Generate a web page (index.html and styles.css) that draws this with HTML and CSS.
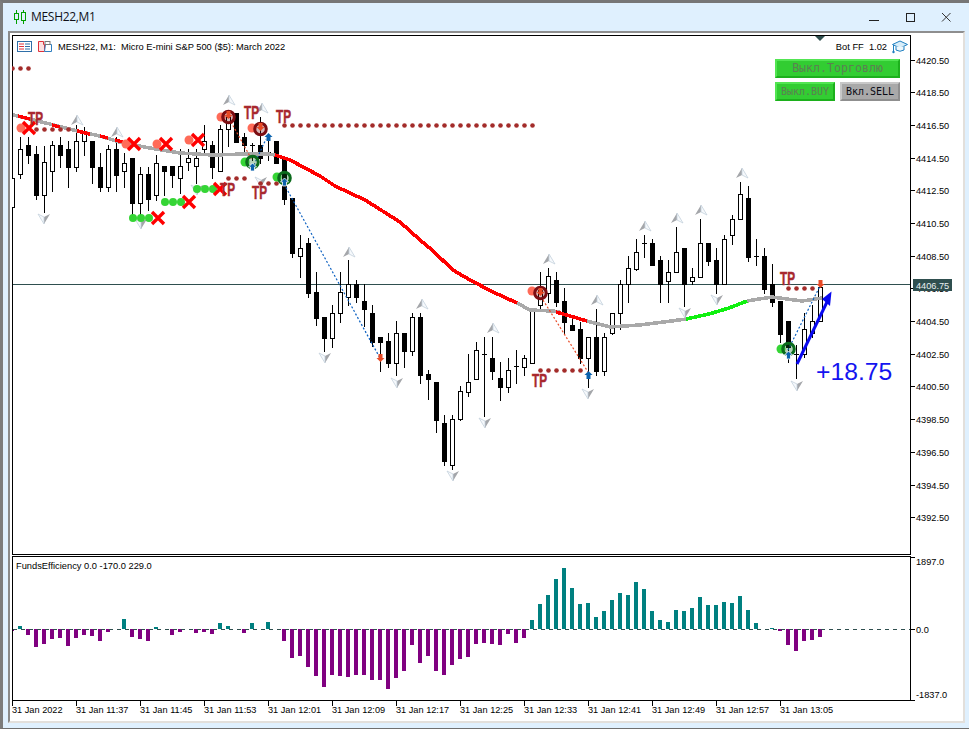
FILE: index.html
```html
<!DOCTYPE html>
<html lang="en">
<head>
<meta charset="utf-8">
<title>MESH22,M1</title>
<link rel="stylesheet" href="styles.css">
</head>
<body>
<div class="window">
  <header class="titlebar">
    <svg class="app-icon" width="12" height="14" viewBox="0 0 12 14"><path d="M2.5 0v14M9.5 0v14" stroke="#00a000" fill="none"/><rect x="0.5" y="3.5" width="4" height="6" fill="#dff0fe" stroke="#00a000"/><rect x="7.5" y="2.5" width="4" height="8" fill="#dff0fe" stroke="#00a000"/></svg>
    <span class="window-title">MESH22,M1</span>
    <div class="controls">
      <svg width="10" height="10" viewBox="0 0 10 10"><path d="M0 8.5h10" stroke="#222"/></svg>
      <svg width="10" height="10" viewBox="0 0 10 10"><rect x="1.5" y="1.5" width="8" height="8" fill="none" stroke="#222"/></svg>
      <svg width="10" height="10" viewBox="0 0 10 10"><path d="M1 1l8.5 8.5M9.5 1L1 9.5" stroke="#333" fill="none"/></svg>
    </div>
  </header>
  <main class="client">
    <section class="pane main-pane">
      <svg id="main-chart" class="plot" width="951" height="520" viewBox="12 35 951 520"></svg>
      <div class="legend">
        <svg class="legend-icon" width="36" height="12" viewBox="0 0 36 12">
          <rect x="0.5" y="0.5" width="14" height="10" fill="#fff" stroke="#2f6fa8"/>
          <path d="M2 3h5M2 5.5h5M2 8h5" stroke="#e0303a"/><path d="M8 3h5M8 5.5h5M8 8h5" stroke="#2f6fa8"/>
          <path d="M21.5 0.5h5v3h1v7h-6z" fill="#fde0e0" stroke="#e0303a"/>
          <path d="M28.5 3.5h6v7h-7z" fill="#fff" stroke="#2f7fc0"/><rect x="28" y="0.5" width="5" height="3" fill="#fff" stroke="#777"/>
        </svg>
        <span class="legend-text">MESH22, M1:&nbsp; Micro E-mini S&amp;P 500 ($5): March 2022</span>
      </div>
      <div class="bot">
        <span class="bot-name">Bot FF&nbsp; 1.02</span>
        <svg width="16" height="14" viewBox="0 0 16 14"><path d="M8 1L15.5 4.5 8 8 .5 4.5z" fill="#d8edf9" stroke="#1f7fc0"/><path d="M4 6.5v3.5q4 2.5 8 0V6.5" fill="#eef7fc" stroke="#1f7fc0"/><path d="M1.5 5v6" stroke="#1f7fc0"/><circle cx="1.5" cy="12" r="1.2" fill="#1f7fc0"/></svg>
      </div>
      <div class="panel">
        <div class="btn btn-wide btn-on">Выкл.Торговлю</div>
        <div class="btn-row">
          <div class="btn btn-on">Выкл.BUY</div>
          <div class="btn btn-off">Вкл.SELL</div>
        </div>
      </div>
    </section>
    <section class="pane sub-pane">
      <svg id="sub-chart" class="plot" width="951" height="165" viewBox="12 556 951 165"></svg>
      <div class="sub-legend">FundsEfficiency 0.0 -170.0 229.0</div>
    </section>
  </main>
</div>
<script src="chart.js"></script>
</body>
</html>
```
FILE: styles.css
```css
html, body {
  margin: 0;
  padding: 0;
  background: #dff0fe;
}
.window {
  box-sizing: border-box;
  width: 969px;
  height: 729px;
  overflow: hidden;
  display: flex;
  flex-direction: column;
  background: #dff0fe;
  border-top: 3px solid #767676;
  border-left: 3px solid #7c7c7c;
  border-bottom: 1px solid #6f6f6f;
}
.titlebar {
  height: 28px;
  flex: none;
  display: flex;
  align-items: center;
  padding-left: 11px;
  padding-right: 18px;
}
.app-icon {
  margin-right: 5px;
}
.window-title {
  font: 12px/1 "Open Sans", "Liberation Sans", sans-serif;
  letter-spacing: -.3px;
  color: #101018;
}
.controls {
  margin-left: auto;
  display: flex;
  gap: 26px;
}
.controls svg {
  display: block;
}
.client {
  box-sizing: border-box;
  width: 957px;
  height: 692px;
  margin-left: 5px;
  background: #fff;
  border-top: 2px solid #8e8e8e;
  border-left: 2px solid #8a8a8a;
  border-right: 2px solid #e2dfdb;
  border-bottom: 2px solid #e2dfdb;
  padding: 2px 0 0 2px;
}
.pane {
  position: relative;
}
.plot {
  display: block;
}
.main-pane {
  height: 520px;
  margin-bottom: 1px;
}
.sub-pane {
  height: 165px;
}
.plot text {
  font-family: "Liberation Sans", sans-serif;
}
.axis-label {
  font-size: 9.2px;
  fill: #000;
}
.tag-label {
  font-size: 9.2px;
  fill: #e8f0f0;
}
.tp-label {
  font-size: 18px;
  font-weight: 700;
  fill: #a8282e;
  stroke: #a8282e;
  stroke-width: .5px;
}
.profit {
  font-size: 24.7px;
  fill: #1414f0;
}
.candles, .ma, .frame, .bars {
  shape-rendering: crispEdges;
}
.legend {
  position: absolute;
  left: 5px;
  top: 6px;
  display: flex;
  align-items: center;
  gap: 5px;
  white-space: nowrap;
}
.legend-text, .bot-name, .sub-legend {
  font: 9.3px/12px "Liberation Sans", sans-serif;
  color: #000;
  white-space: nowrap;
}
.bot {
  position: absolute;
  right: 55px;
  top: 5px;
  display: flex;
  align-items: center;
  gap: 5px;
}
.panel {
  position: absolute;
  left: 763px;
  top: 24px;
  width: 125px;
  display: flex;
  flex-direction: column;
  gap: 4px;
}
.btn-row {
  display: flex;
  gap: 5px;
}
.btn {
  box-sizing: border-box;
  width: 60px;
  height: 19px;
  border-style: solid;
  border-width: 2px;
  font: 10px/15px "DejaVu Sans Mono", monospace;
  text-align: center;
}
.btn-wide {
  width: 125px;
  font-size: 11.6px;
}
.btn-on {
  background: #32cd32;
  border-color: #52e552 #1cb01c #1cb01c #52e552;
  color: #5c7f52;
}
.btn-off {
  background: #a9a9a9;
  border-color: #c8c8c8 #8f8f8f #8f8f8f #c8c8c8;
  color: #0a0a14;
}
.sub-legend {
  position: absolute;
  left: 4px;
  top: 4px;
}
```
FILE: chart.js
```js
// [x, high, bodyTop, bodyBottom, low, kind]  kind: w = bull (hollow), b = bear (filled), d = doji
var candles = [
[12,172,178,207,212,'w'],[20,137,149,174,178,'w'],[28,137,145,155,163,'b'],[36,146,154,195,199,'b'],
[44,146,162,195,212,'w'],[52,141,145,171,191,'w'],[60,137,145,155,167,'b'],[68,141,149,167,187,'b'],
[76,125,141,167,171,'w'],[84,127,133,141,155,'w'],[92,141,141,167,183,'b'],[100,153,167,187,191,'b'],
[108,145,149,187,191,'w'],[116,137,149,175,191,'b'],[124,153,163,171,187,'w'],[132,158,158,203,215,'b'],
[140,167,174,203,217,'w'],[148,167,174,199,210,'b'],[156,155,163,195,200,'w'],[164,166,166,171,195,'b'],
[172,166,166,175,187,'b'],[180,149,166,178,193,'w'],[188,149,158,162,170,'w'],[196,149,158,166,183,'w'],
[204,125,141,149,153,'w'],[212,141,145,167,178,'b'],[220,125,129,171,171,'w'],[228,113,117,129,146,'w'],
[236,113,113,142,142,'b'],[244,133,137,145,153,'b'],[252,143,145,145,160,'d'],[260,117,145,158,163,'b'],
[268,137,152,152,160,'d'],[276,141,141,163,163,'b'],[284,159,159,199,204,'b'],[292,198,198,253,257,'b'],
[300,235,248,256,277,'w'],[308,238,243,293,297,'b'],[316,272,292,318,325,'b'],[324,317,317,338,351,'b'],
[332,305,313,338,347,'w'],[340,272,292,313,322,'w'],[348,260,284,297,305,'w'],[356,280,284,297,302,'b'],
[364,284,301,309,326,'b'],[372,305,313,342,346,'b'],[380,337,337,342,371,'b'],[388,333,341,363,367,'b'],
[396,321,333,363,375,'w'],[404,333,333,351,367,'b'],[412,313,317,351,355,'w'],[420,313,317,375,383,'b'],
[428,370,374,379,399,'b'],[436,382,382,420,432,'b'],[444,415,423,461,465,'b'],[452,415,419,465,469,'w'],
[460,386,391,419,420,'w'],[468,354,382,392,396,'w'],[476,342,350,379,379,'w'],[484,337,354,354,416,'d'],
[492,337,358,371,379,'b'],[500,362,378,387,400,'b'],[508,358,370,387,392,'w'],[516,350,366,366,383,'d'],
[524,355,358,367,375,'w'],[532,310,310,363,363,'w'],[540,272,290,305,310,'w'],[548,268,276,293,302,'w'],
[556,272,280,302,306,'b'],[564,288,301,322,334,'b'],[572,318,325,330,330,'b'],[580,322,329,358,363,'b'],
[588,337,337,358,387,'w'],[596,309,337,371,375,'b'],[604,333,337,371,375,'w'],[612,313,313,333,334,'w'],
[620,280,284,313,329,'w'],[628,256,268,284,302,'w'],[636,239,252,269,270,'w'],[644,235,243,243,257,'d'],
[652,239,243,265,265,'b'],[660,256,260,284,302,'b'],[668,260,272,281,302,'w'],[676,227,252,272,272,'w'],
[684,248,248,284,306,'b'],[692,268,277,281,284,'w'],[700,219,243,277,277,'w'],[708,243,243,261,265,'b'],
[716,248,260,284,293,'b'],[724,235,239,284,284,'w'],[732,215,219,235,244,'w'],[740,182,194,219,219,'w'],
[748,186,198,257,261,'b'],[756,239,256,256,265,'d'],[764,248,256,289,293,'b'],[772,264,284,302,306,'b'],
[780,301,301,334,342,'b'],[788,321,321,347,362,'b'],[796,345,354,354,378,'d'],[804,313,329,354,357,'w'],
[812,305,321,333,337,'w'],[820,284,287,321,321,'w']
];

// [x, endY]  endY < 629: teal, rising from the zero line; endY > 629: purple, falling from it
var bars = [
[12,630],[20,626],[28,634],[36,646],[44,643],[52,638],[60,637],[68,645],[76,637],[84,634],[92,635],[100,640],[108,631],
[124,619],[132,636],[140,638],[148,640],[156,627],[172,634],[180,631],[196,632],[204,631],[212,633],[220,623],[228,626],
[244,632],[252,623],[268,622],[284,640],[292,657],[300,655],[308,666],[316,675],[324,686],[332,674],[340,675],[348,676],
[356,674],[364,674],[372,679],[380,679],[388,688],[396,677],[404,670],[412,644],[420,662],[428,655],[436,670],[444,674],
[452,664],[460,658],[468,656],[476,643],[484,642],[492,643],[500,644],[508,633],[516,642],[524,637],[532,620],[540,604],
[548,595],[556,579],[564,568],[572,588],[580,604],[588,603],[596,617],[604,611],[612,600],[620,593],[628,595],[636,582],
[644,589],[652,611],[660,620],[668,622],[676,610],[684,611],[692,608],[700,597],[708,605],[716,605],[724,602],[732,603],
[740,596],[748,610],[756,623],[772,628],[780,630],[788,644],[796,650],[804,640],[812,639],[820,636]
];

var DOT = '#a32c2a', SALMON = '#ff6b58', RED = '#ff0000', SLATE = '#2f4f4f', BLUE = '#0a5fc0', ORANGE = '#e84a26', GREEN = '#35d535', ARROW = '#0808f0';

function rect(x, y, w, h, fill) {
  return '<rect x="' + x + '" y="' + y + '" width="' + w + '" height="' + h + '" fill="' + fill + '"/>';
}
function circle(x, y, r, fill, extra) {
  return '<circle cx="' + x + '" cy="' + y + '" r="' + r + '" fill="' + fill + '"' + (extra || '') + '/>';
}
function candle(c) {
  var x = c[0], hi = c[1], t = c[2], b = c[3], lo = c[4], k = c[5];
  var s = rect(x, hi, 1, lo - hi + 1, '#000');
  if (k === 'd') return s + rect(x - 2, t, 5, 1, '#000');
  s += rect(x - 2, t, 5, b - t + 1, '#000');
  if (k === 'w') s += rect(x - 1, t + 1, 3, b - t - 1, '#fff');
  return s;
}
function dots(xs, y) {
  return xs.map(function (x) { return circle(x + .5, y + .5, 2.3, DOT); }).join('');
}
function range(a, b, step) {
  var out = [];
  for (var i = a; i <= b; i += step) out.push(i);
  return out;
}
function greens(xs, y) {
  return xs.map(function (x) { return circle(x, y, 4, GREEN); }).join('');
}
function cross(x, y) {
  return '<path d="M' + (x - 6) + ' ' + (y - 6) + 'L' + (x + 6) + ' ' + (y + 6) + 'M' + (x + 6) + ' ' + (y - 6) + 'L' + (x - 6) + ' ' + (y + 6) +
    '" stroke="' + RED + '" stroke-width="3.4" fill="none"/>';
}
function tp(x, y) {
  return '<text class="tp-label" x="' + x + '" y="' + y + '" textLength="15" lengthAdjust="spacingAndGlyphs">TP</text>';
}
function upMark(x, y) {
  return '<path d="M' + x + ' ' + (y - 5) + 'L' + (x - 6) + ' ' + (y + 5) + 'L' + x + ' ' + (y + 2) + 'z" fill="#a4a6aa"/>' +
    '<path d="M' + x + ' ' + (y - 5) + 'L' + (x + 6) + ' ' + (y + 5) + 'L' + x + ' ' + (y + 2) + 'z" fill="#f6f9fc" stroke="#c4d0dc" stroke-width=".8"/>';
}
function downMark(x, y) {
  return '<path d="M' + x + ' ' + (y + 5) + 'L' + (x + 6) + ' ' + (y - 5) + 'L' + x + ' ' + (y - 2) + 'z" fill="#a4a6aa"/>' +
    '<path d="M' + x + ' ' + (y + 5) + 'L' + (x - 6) + ' ' + (y - 5) + 'L' + x + ' ' + (y - 2) + 'z" fill="#f6f9fc" stroke="#c4d0dc" stroke-width=".8"/>';
}
function arrowUp(x, y, outline) {
  return '<path d="M' + x + ' ' + (y - 4) + 'L' + (x + 4) + ' ' + y + 'H' + (x + 2) + 'V' + (y + 4) + 'H' + (x - 2) + 'V' + y + 'H' + (x - 4) + 'z" fill="#0a62ad"' +
    (outline ? ' stroke="#fff" stroke-width=".8"' : '') + '/>';
}
function arrowDown(x, y) {
  return '<path d="M' + x + ' ' + (y + 4) + 'L' + (x + 4) + ' ' + y + 'H' + (x + 2) + 'V' + (y - 4) + 'H' + (x - 2) + 'V' + y + 'H' + (x - 4) + 'z" fill="' + ORANGE + '"/>';
}
function ring(x, y, color) {
  return '<circle cx="' + x + '" cy="' + y + '" r="5.8" fill="' + color + '" fill-opacity=".3" stroke="' + color + '" stroke-width="3"/>';
}
function dotted(x1, y1, x2, y2, color) {
  return '<line x1="' + x1 + '" y1="' + y1 + '" x2="' + x2 + '" y2="' + y2 + '" stroke="' + color + '" stroke-width="1.2" stroke-dasharray="2 2"/>';
}
function poly(points, color) {
  return '<polyline fill="none" stroke-linejoin="round" stroke-width="3.6" stroke="' + color + '" points="' + points + '"/>';
}

function drawMain() {
  var s = '';
  // price axis
  var prices = [
    ['4420.50', 60], ['4418.50', 92], ['4416.50', 125], ['4414.50', 158], ['4412.50', 190], ['4410.50', 223],
    ['4408.50', 256], ['4406.50', 288], ['4404.50', 321], ['4402.50', 354], ['4400.50', 386], ['4398.50', 419],
    ['4396.50', 452], ['4394.50', 485], ['4392.50', 517]
  ];
  s += '<g class="frame">' + rect(12, 35, 899, 1, '#000') + rect(12, 35, 1, 520, '#000') + rect(910, 35, 1, 520, '#000') + rect(12, 554, 899, 1, '#000');
  prices.forEach(function (p) { s += rect(911, p[1], 4, 1, '#000'); });
  s += '</g>';
  prices.forEach(function (p) {
    s += '<text class="axis-label" x="916" y="' + (p[1] + 4) + '">' + p[0] + '</text>';
  });
  s += rect(913, 279, 39, 12, SLATE) + '<text class="tag-label" x="916" y="288.5">4406.75</text>';
  s += '<path d="M815 36h10l-5 5z" fill="' + SLATE + '"/>';
  s += rect(13, 284, 897, 1, SLATE);

  // candles
  s += '<g class="candles">' + candles.map(candle).join('') + '</g>';

  // moving average: gray base with coloured trend stretches
  s += '<g class="ma">';
  s += poly('13,115 22,117 33,120 50,124 77,131 100,136 123,143 150,148 180,153 213,155 245,154 267,154 275,155', '#a9a9a9');
  s += poly('18,116 30,119', RED) + poly('52,125 60,127', RED) + poly('77,131 90,134', RED) + poly('100,136 108,138', RED) + poly('115,140 123,142', RED);
  s += poly('517,303 530,310 553,311 560,312', '#a9a9a9') + poly('587,321 610,327 640,325 664,322 686,319', '#a9a9a9');
  s += poly('747,301 772,297 802,301 822,298', '#a9a9a9');
  s += poly('275,155 290,160 320,176 335,186 365,200 400,222 420,240 432,250 453,270 470,280 493,292 517,303', RED);
  s += poly('556,312 570,316 587,321', RED);
  s += poly('686,319 709,314 729,308 747,301', '#10f010');
  s += '</g>';

  // trade links
  s += dotted(284, 184, 380, 358, BLUE) + dotted(543, 300, 588, 372, ORANGE) + dotted(788, 350, 820, 286, BLUE);
  s += dotted(231, 122, 252, 160, ORANGE) + dotted(254, 165, 266, 139, BLUE);

  // triangle markers
  [[229,100],[77,120],[117,132],[262,108],[349,252],[422,304],[493,328],[549,259],[597,300],[645,226],[677,218],[701,210],[742,173]]
    .forEach(function (p) { s += upMark(p[0], p[1]); });
  [[44,219],[141,224],[197,190],[261,182],[325,358],[397,383],[485,423],[453,476],[588,394],[685,313],[717,300],[797,386]]
    .forEach(function (p) { s += downMark(p[0], p[1]); });

  // take-profit levels
  s += dots([12, 20, 28], 68);
  s += dots(range(36, 68, 8), 129);
  s += dots(range(284, 532, 8), 125);
  s += dots([228, 236, 244], 178);
  s += dots([260, 268, 276], 183);
  s += dots(range(540, 580, 8), 370);
  s += dots([788, 796, 804, 812], 288);

  // closed trades
  s += circle(21, 128, 4.5, SALMON) + cross(29, 128);
  s += circle(126, 144, 4.5, SALMON) + cross(134, 144);
  s += circle(157, 144, 4.5, SALMON) + cross(166, 144);
  s += circle(189, 140, 4.5, SALMON) + cross(198, 140);
  s += greens([133, 141, 149], 218) + cross(158, 218);
  s += greens([165, 173, 181], 202) + cross(189, 202);
  s += greens([197, 205, 213], 189) + cross(220, 189);

  // open markers
  s += circle(221, 117, 4.5, SALMON) + ring(228.5, 117, '#7b0d12') + arrowDown(228.5, 115);
  s += circle(252, 128, 4.5, SALMON) + ring(260.5, 129, '#7b0d12') + arrowDown(260.5, 127);
  s += circle(532, 291, 4.5, SALMON) + ring(540.5, 293, '#7b0d12') + arrowDown(540.5, 292);
  s += circle(245, 162, 4.5, GREEN) + ring(252.5, 162, '#0b6b1c') + arrowUp(252.5, 167, true);
  s += circle(277, 177, 4.5, GREEN) + ring(284.5, 178, '#0b6b1c') + arrowUp(284.5, 182, true);
  s += circle(781, 349, 4.5, GREEN) + ring(788.5, 349, '#0b6b1c') + arrowUp(788.5, 355, true);

  // small arrows
  s += arrowUp(268.5, 137) + arrowUp(588.5, 375) + arrowDown(380.5, 358) + arrowDown(820.5, 284);

  // labels
  s += tp(28, 125) + tp(244, 119) + tp(276, 123) + tp(220, 196) + tp(252, 199) + tp(532, 387) + tp(780, 285);

  // result
  s += '<path d="M797 364L827 302" stroke="' + ARROW + '" stroke-width="3" fill="none"/><path d="M831.5 291.5L830 306 822 299z" fill="' + ARROW + '"/>';
  s += '<text class="profit" x="816" y="380">+18.75</text>';
  document.getElementById('main-chart').innerHTML = s;
}

function drawSub() {
  var s = '<g class="bars">';
  bars.forEach(function (b) {
    var y = b[1];
    if (y < 629) s += rect(b[0] - 2, y, 4, 629 - y, '#008080');
    else s += rect(b[0] - 2, 629, 4, y - 629 + 1, '#800080');
  });
  s += '</g>';
  s += '<line x1="13" x2="910" y1="629.5" y2="629.5" stroke="' + SLATE + '" stroke-dasharray="4 4" class="frame"/>';
  s += '<g class="frame">' + rect(12, 556, 899, 1, '#000') + rect(12, 556, 1, 145, '#000') + rect(910, 556, 1, 145, '#000') + rect(12, 700, 899, 1, '#000');
  [557, 629, 700].forEach(function (y) { s += rect(911, y, 4, 1, '#000'); });
  var times = ['31 Jan 2022', '31 Jan 11:37', '31 Jan 11:45', '31 Jan 11:53', '31 Jan 12:01', '31 Jan 12:09', '31 Jan 12:17',
    '31 Jan 12:25', '31 Jan 12:33', '31 Jan 12:41', '31 Jan 12:49', '31 Jan 12:57', '31 Jan 13:05'];
  times.forEach(function (t, i) { s += rect(12 + i * 64, 701, 1, 5, '#000'); });
  s += '</g>';
  times.forEach(function (t, i) {
    s += '<text class="axis-label" x="' + (12 + i * 64) + '" y="713">' + t + '</text>';
  });
  s += '<text class="axis-label" x="916" y="565">1897.0</text>';
  s += '<text class="axis-label" x="916" y="633">0.0</text>';
  s += '<text class="axis-label" x="916" y="698">-1837.0</text>';
  document.getElementById('sub-chart').innerHTML = s;
}

drawMain();
drawSub();
```
